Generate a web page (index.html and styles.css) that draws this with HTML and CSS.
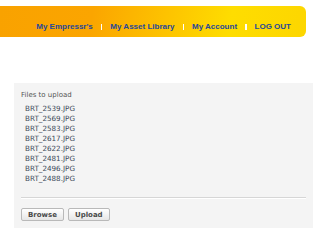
FILE: index.html
```html
<!DOCTYPE html>
<html>
<head>
  <meta charset="UTF-8" />
  <title>Upload</title>
  <link rel="stylesheet" href="styles.css">
</head>
<body>

  <div id="top-bar">
    <div class="nav-links">
      <a href="#">My Empressr's</a>
      <span class="sep"></span>
      <a href="#">My Asset Library</a>
      <span class="sep"></span>
      <a href="#">My Account</a>
      <span class="sep"></span>
      <a href="#">LOG OUT</a>
    </div>
  </div>

  <div id="upload-panel">
    <div class="panel-title">Files to upload</div>
    <ul class="file-list">
      <li>BRT_2539.JPG</li>
      <li>BRT_2569.JPG</li>
      <li>BRT_2583.JPG</li>
      <li>BRT_2617.JPG</li>
      <li>BRT_2622.JPG</li>
      <li>BRT_2481.JPG</li>
      <li>BRT_2496.JPG</li>
      <li>BRT_2488.JPG</li>
    </ul>
    <div class="divider"></div>
    <div class="panel-buttons">
      <button>Browse</button>
      <button>Upload</button>
    </div>
  </div>

</body>
</html>
```

FILE: styles.css
```css
html, body {
  margin: 0;
  background-color: #fff;
  font-family: "DejaVu Sans", Verdana, sans-serif;
}

#top-bar {
  margin-top: 6px;
  width: 306px;
  height: 31px;
  box-sizing: border-box;
  border-radius: 0 6px 6px 0;
  background: linear-gradient(100deg, #f9a200 0%, #fba500 30%, #fdc400 55%, #fedd00 75%, #fdd600 100%);
  display: flex;
  align-items: flex-end;
  justify-content: flex-end;
  padding: 0 15px 6px 0;
}

.nav-links {
  display: flex;
  align-items: center;
  gap: 8px;
}

.nav-links a {
  font-family: "Liberation Sans", Arial, sans-serif;
  font-weight: bold;
  font-size: 8px;
  color: #27489a;
  text-decoration: none;
}

.nav-links .sep {
  width: 1.5px;
  height: 6px;
  background-color: #fff;
}

#upload-panel {
  margin: 46px 0 0 14px;
  width: 299px;
  height: 145px;
  box-sizing: border-box;
  background-color: #f4f4f4;
  padding: 8px 7px 0 7px;
}

.panel-title {
  font-size: 7px;
  color: #555;
  line-height: 9px;
}

.file-list {
  list-style: none;
  margin: 4px 0 0 0;
  padding: 0 0 0 4px;
}

.file-list li {
  font-size: 7.2px;
  line-height: 10px;
  color: #3c4a5a;
}

.divider {
  margin-top: 13px;
  height: 1px;
  background-color: #d6d6d6;
  border-bottom: 1px solid #fff;
}

.panel-buttons {
  display: flex;
  gap: 4px;
  margin-top: 9px;
}

.panel-buttons button {
  font-family: "DejaVu Sans", Verdana, sans-serif;
  font-weight: bold;
  font-size: 7px;
  color: #4a4a4a;
  height: 13px;
  padding: 0 6px;
  border: 1px solid #b9b9b9;
  border-radius: 2px;
  background: linear-gradient(#ffffff, #e6e6e6);
}
```
